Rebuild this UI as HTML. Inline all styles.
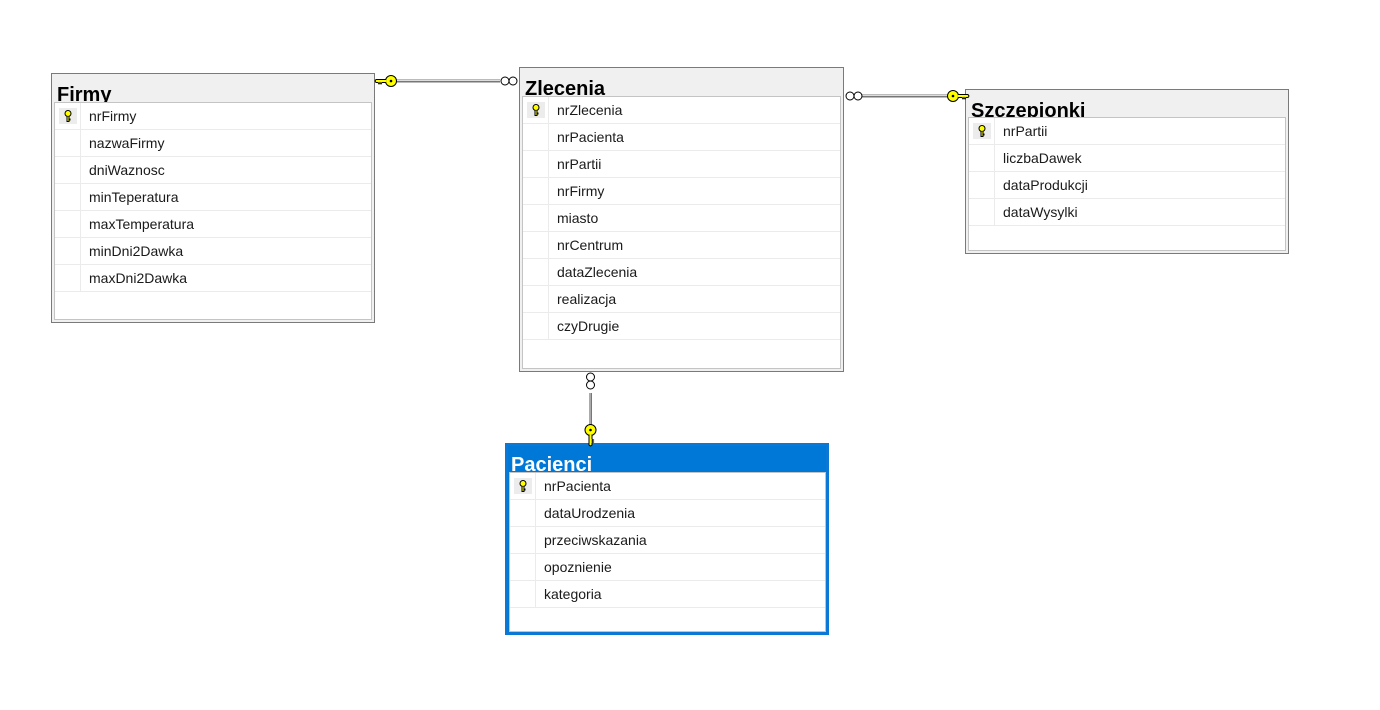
<!DOCTYPE html>
<html><head><meta charset="utf-8"><style>
body{margin:0;width:1380px;height:710px;background:#fff;position:relative;overflow:hidden;font-family:"Liberation Sans",sans-serif}
.t{position:absolute;box-sizing:border-box;border:1px solid #7a7a7a;background:#f0f0f0}
.ti{position:absolute;left:5px;font-weight:bold;font-size:20px;line-height:22px;color:#000}
.in{position:absolute;left:2px;right:2px;bottom:2px;background:#fff;border:1px solid #c4c4c4;box-sizing:border-box}
.r{height:27px;border-bottom:1px solid #ebebeb;box-sizing:border-box;position:relative;font-size:14px;line-height:26px;color:#1a1a1a}
.r span{position:absolute;left:34px}
.r:before{content:"";position:absolute;left:25px;top:0;bottom:-1px;border-left:1px solid #ebebeb}
.k{position:absolute;left:4px;top:5px;width:18px;height:16px;background:#ececec}
.k svg{position:absolute;left:5px;top:2px}
.p{border:3px solid #0a78d4;background:#0078d7}
.p .ti{color:#fff;left:3px}
.p .in{left:1px;right:0;bottom:0}
</style></head><body>

<div class="t" style="left:51px;top:73px;width:324px;height:250px">
<div class="ti" style="top:10px">Firmy</div>
<div class="in" style="top:28px">
<div class="r"><div class="k"><svg width="8" height="12"><circle cx="4" cy="3.5" r="3" fill="#ff0" stroke="#000"/><path d="M3 6.5V11.5H5V10H6V9H5V6.5" fill="#ff0" stroke="#000" stroke-width="1"/></svg></div><span>nrFirmy</span></div>
<div class="r"><span>nazwaFirmy</span></div>
<div class="r"><span>dniWaznosc</span></div>
<div class="r"><span>minTeperatura</span></div>
<div class="r"><span>maxTemperatura</span></div>
<div class="r"><span>minDni2Dawka</span></div>
<div class="r"><span>maxDni2Dawka</span></div>
</div></div>

<div class="t" style="left:519px;top:67px;width:325px;height:305px">
<div class="ti" style="top:10px">Zlecenia</div>
<div class="in" style="top:28px">
<div class="r"><div class="k"><svg width="8" height="12"><circle cx="4" cy="3.5" r="3" fill="#ff0" stroke="#000"/><path d="M3 6.5V11.5H5V10H6V9H5V6.5" fill="#ff0" stroke="#000" stroke-width="1"/></svg></div><span>nrZlecenia</span></div>
<div class="r"><span>nrPacienta</span></div>
<div class="r"><span>nrPartii</span></div>
<div class="r"><span>nrFirmy</span></div>
<div class="r"><span>miasto</span></div>
<div class="r"><span>nrCentrum</span></div>
<div class="r"><span>dataZlecenia</span></div>
<div class="r"><span>realizacja</span></div>
<div class="r"><span>czyDrugie</span></div>
</div></div>

<div class="t" style="left:965px;top:89px;width:324px;height:165px">
<div class="ti" style="top:10px">Szczepionki</div>
<div class="in" style="top:27px">
<div class="r"><div class="k"><svg width="8" height="12"><circle cx="4" cy="3.5" r="3" fill="#ff0" stroke="#000"/><path d="M3 6.5V11.5H5V10H6V9H5V6.5" fill="#ff0" stroke="#000" stroke-width="1"/></svg></div><span>nrPartii</span></div>
<div class="r"><span>liczbaDawek</span></div>
<div class="r"><span>dataProdukcji</span></div>
<div class="r"><span>dataWysylki</span></div>
</div></div>

<div class="t p" style="left:505px;top:443px;width:324px;height:192px">
<div class="ti" style="top:8px">Pacienci</div>
<div class="in" style="top:26px">
<div class="r"><div class="k"><svg width="8" height="12"><circle cx="4" cy="3.5" r="3" fill="#ff0" stroke="#000"/><path d="M3 6.5V11.5H5V10H6V9H5V6.5" fill="#ff0" stroke="#000" stroke-width="1"/></svg></div><span>nrPacienta</span></div>
<div class="r"><span>dataUrodzenia</span></div>
<div class="r"><span>przeciwskazania</span></div>
<div class="r"><span>opoznienie</span></div>
<div class="r"><span>kategoria</span></div>
</div></div>

<svg width="1380" height="710" style="position:absolute;left:0;top:0;z-index:5">
<defs>
<g id="keyh"><circle cx="0" cy="0" r="5.5" fill="#ffff00" stroke="#000" stroke-width="1"/><circle cx="0" cy="0" r="1.3" fill="#000"/><path d="M-5 -1.5 H-15 L-16 0 L-15 1.5 H-13 L-12 3 L-11 1.5 L-10 3 L-9 1.5 H-5" fill="#ffff00" stroke="#000" stroke-width="1"/></g>
</defs>
<line x1="396" y1="81" x2="500" y2="81" stroke="#777" stroke-width="3"/><line x1="396" y1="80.5" x2="500" y2="80.5" stroke="#ddd" stroke-width="1"/>
<use href="#keyh" transform="translate(391,81)"/>
<circle cx="505" cy="81" r="4" fill="#fff" stroke="#000"/><circle cx="513" cy="81" r="4" fill="#fff" stroke="#000"/>
<line x1="862" y1="96" x2="950" y2="96" stroke="#777" stroke-width="3"/><line x1="862" y1="95.5" x2="950" y2="95.5" stroke="#ddd" stroke-width="1"/>
<circle cx="850" cy="96" r="4" fill="#fff" stroke="#000"/><circle cx="858" cy="96" r="4" fill="#fff" stroke="#000"/>
<use href="#keyh" transform="translate(953,96) scale(-1,1)"/>
<line x1="590.5" y1="393" x2="590.5" y2="426" stroke="#777" stroke-width="3"/><line x1="590" y1="393" x2="590" y2="426" stroke="#ddd" stroke-width="1"/>
<circle cx="590.5" cy="377" r="4" fill="#fff" stroke="#000"/><circle cx="590.5" cy="385" r="4" fill="#fff" stroke="#000"/>
<use href="#keyh" transform="translate(590.5,430) rotate(-90)"/>
</svg>
</body></html>
